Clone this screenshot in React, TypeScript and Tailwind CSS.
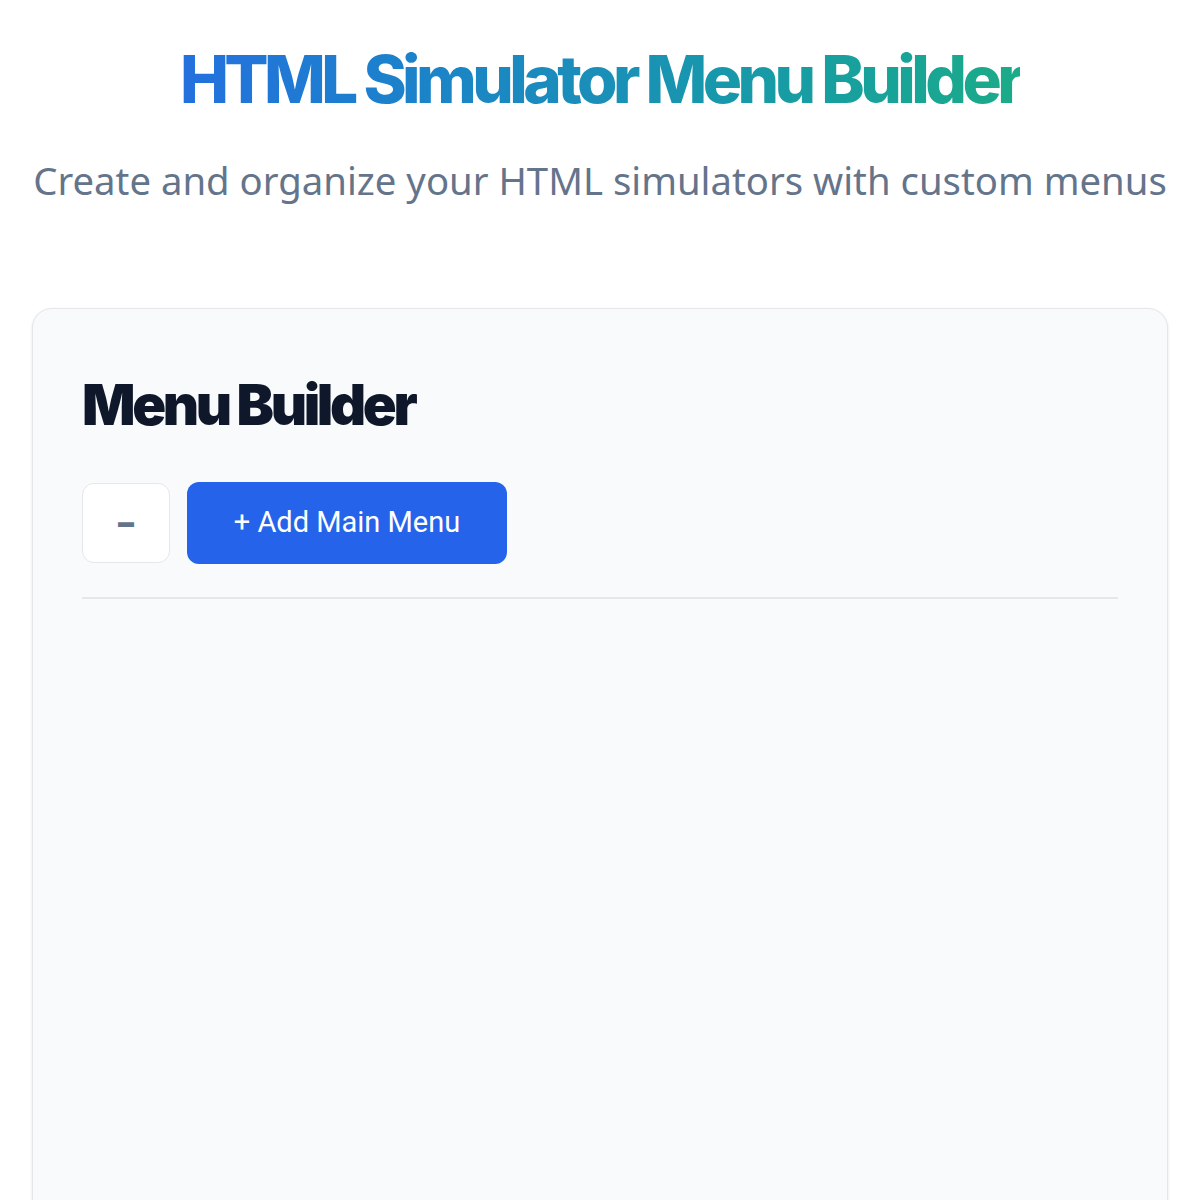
import React from "react";

const App = () => {
  return (
    <div className="min-h-screen bg-white px-8 pt-[38px] font-['Noto_Sans',sans-serif]">
      <header className="text-center">
        <h1 className="inline-block bg-gradient-to-r from-[#2470de] via-[#1a8fb8] to-[#1cab88] bg-clip-text text-[65.5px] font-extrabold leading-[84px] tracking-[-0.07em] text-transparent font-['Inter',sans-serif]">
          HTML Simulator Menu Builder
        </h1>
        <p className="mt-[32px] text-[38.3px] leading-[52px] text-[#64748b]">
          Create and organize your HTML simulators with custom menus
        </p>
      </header>

      <main className="mt-[102px] rounded-[20px] border border-[#e5e7eb] bg-[#f8fafc] px-[49px] pt-[58px] pb-[640px] shadow-sm">
        <h2 className="text-[56px] font-black leading-[76px] tracking-[-0.06em] text-[#0f172a] font-['Inter',sans-serif]">
          Menu Builder
        </h2>
        <div className="mt-[39px] flex items-center gap-[17px]">
          <button className="flex h-[80px] w-[88px] items-center justify-center rounded-xl border border-[#e5e7eb] bg-white text-[32px] font-black text-[#64748b] font-['Inter',sans-serif]">
            –
          </button>
          <button className="h-[82px] w-[320px] rounded-xl bg-[#2563eb] text-[29px] text-white font-['Roboto',sans-serif]">
            + Add Main Menu
          </button>
        </div>
        <div className="mt-[33px] border-t-2 border-[#e5e7eb]" />
      </main>
    </div>
  );
};

export default App;
